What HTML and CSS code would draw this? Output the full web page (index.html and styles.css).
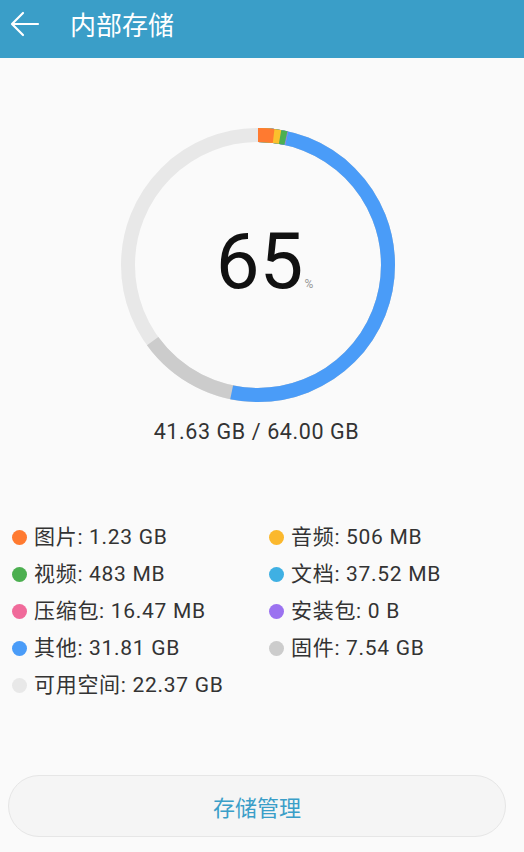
FILE: index.html
```html
<!DOCTYPE html>
<html lang="zh-CN">
<head>
  <meta charset="UTF-8" />
  <meta name="viewport" content="width=device-width, initial-scale=1.0" />
  <title>内部存储</title>
  <link rel="stylesheet" href="styles.css">
</head>
<body>
  <div class="header">
    <svg class="back" width="30" height="26" viewBox="0 0 30 26">
      <path d="M28 13 H3 M13 2 L2 13 L13 24" fill="none" stroke="#fff" stroke-width="2.2" stroke-linecap="round" stroke-linejoin="round"/>
    </svg>
    <h1>内部存储</h1>
  </div>

  <div class="chart">
    <div class="ring">
      <!-- 总量 64 GB，周长 2*pi*130 = 816.8 -->
      <svg width="290" height="290" viewBox="0 0 290 290">
        <g transform="rotate(-90 145 145)" fill="none" stroke-width="14">
          <circle cx="145" cy="145" r="130" stroke="#e8e8e8"/>
          <circle cx="145" cy="145" r="130" stroke="#cccccc" stroke-dasharray="531.0 816.8"/>
          <circle cx="145" cy="145" r="130" stroke="#4a9cf8" stroke-dasharray="434.8 816.8"/>
          <circle cx="145" cy="145" r="130" stroke="#ab7ff0" stroke-dasharray="29.0 816.8"/>
          <circle cx="145" cy="145" r="130" stroke="#f06a9a" stroke-dasharray="28.8 816.8"/>
          <circle cx="145" cy="145" r="130" stroke="#3fb0e3" stroke-dasharray="28.6 816.8"/>
          <circle cx="145" cy="145" r="130" stroke="#4caf50" stroke-dasharray="28.1 816.8"/>
          <circle cx="145" cy="145" r="130" stroke="#fbc02d" stroke-dasharray="22.2 816.8"/>
          <circle cx="145" cy="145" r="130" stroke="#ff7a30" stroke-dasharray="15.7 816.8"/>
        </g>
      </svg>
      <div class="percent">65<span>%</span></div>
    </div>
    <div class="total">41.63 GB / 64.00 GB</div>
  </div>

  <ul class="legend">
    <li><i style="background:#ff7a30"></i>图片: 1.23 GB</li>
    <li><i style="background:#fbb82d"></i>音频: 506 MB</li>
    <li><i style="background:#4caf50"></i>视频: 483 MB</li>
    <li><i style="background:#3fb0e3"></i>文档: 37.52 MB</li>
    <li><i style="background:#f06a9a"></i>压缩包: 16.47 MB</li>
    <li><i style="background:#9b72f0"></i>安装包: 0 B</li>
    <li><i style="background:#4a9cf8"></i>其他: 31.81 GB</li>
    <li><i style="background:#cccccc"></i>固件: 7.54 GB</li>
    <li><i style="background:#e8e8e8"></i>可用空间: 22.37 GB</li>
  </ul>

  <div class="footer">
    <button type="button">存储管理</button>
  </div>
</body>
</html>
```

FILE: styles.css
```css
body {
    margin: 0;
    height: 852px;
    background: #fafafa;
    font-family: Roboto, "Noto Sans CJK SC", sans-serif;
    color: #333;
    display: flex;
    flex-direction: column;
}
.header {
    height: 58px;
    background: #3a9ec8;
    display: flex;
    align-items: center;
    padding-left: 10px;
}
.back {
    margin-top: -10px;
}
.header h1 {
    margin: -12px 0 0 30px;
    font-size: 26px;
    font-weight: 400;
    color: #fff;
}
.chart {
    display: flex;
    flex-direction: column;
    align-items: center;
    padding-top: 62px;
}
.ring {
    position: relative;
    width: 290px;
    height: 290px;
    margin-left: -9px;
}
.ring svg {
    display: block;
}
.percent {
    position: absolute;
    left: 0;
    right: 0;
    top: 97px;
    text-align: center;
    font-size: 78px;
    line-height: 90px;
    color: #111;
    padding-left: 14px;
}
.percent span {
    font-size: 12px;
    color: #999;
    margin-left: 1px;
}
.total {
    margin: 9px 11px 0 0;
    font-size: 21.5px;
    letter-spacing: 0.6px;
    color: #333;
}
.legend {
    list-style: none;
    margin: 79px 0 0;
    padding: 0 0 0 12px;
    display: grid;
    grid-template-columns: 257px 1fr;
    row-gap: 9px;
}
.legend li {
    display: flex;
    align-items: center;
    font-size: 21px;
    letter-spacing: 0.7px;
    line-height: 28px;
    color: #333;
}
.legend i {
    width: 15px;
    height: 15px;
    border-radius: 50%;
    margin-right: 7px;
}
.footer {
    margin-top: auto;
    padding: 0 18px 15px 8px;
}
.footer button {
    width: 100%;
    height: 62px;
    border: 1px solid #e6e6e6;
    border-radius: 31px;
    background: #f5f5f5;
    color: #3a9ec8;
    font-family: Roboto, "Noto Sans CJK SC", sans-serif;
    font-size: 22px;
}
```
